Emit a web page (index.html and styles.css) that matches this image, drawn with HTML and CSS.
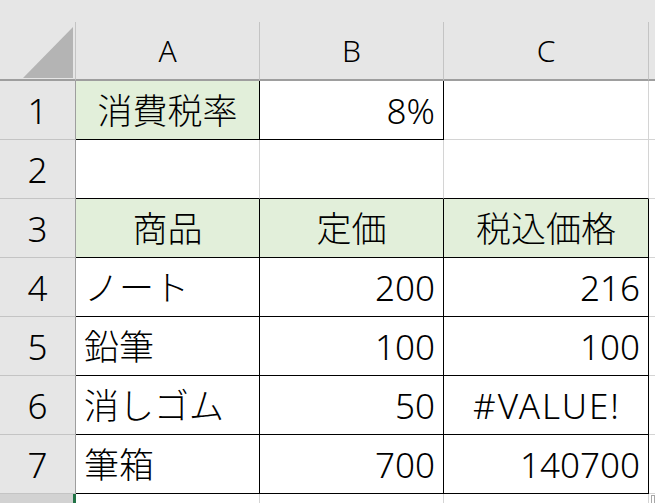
FILE: index.html
```html
<!DOCTYPE html>
<html lang="ja">
<head>
<meta charset="utf-8">
<link rel="stylesheet" href="styles.css">
</head>
<body>
<div class="sheet">
  <div class="topbar"></div>

  <div class="corner"><svg width="50" height="51" viewBox="0 0 50 51"><polygon points="50,0 50,51 0,51" fill="#b4b4b4"/></svg></div>
  <div class="colhead">A</div>
  <div class="colhead">B</div>
  <div class="colhead">C</div>
  <div class="colhead last"></div>

  <div class="rowhead">1</div>
  <div class="cell fill c br bb">消費税率</div>
  <div class="cell r br bb">8%</div>
  <div class="cell"></div>
  <div class="cell last"></div>

  <div class="rowhead">2</div>
  <div class="cell bb"></div>
  <div class="cell bb"></div>
  <div class="cell bb"></div>
  <div class="cell last"></div>

  <div class="rowhead">3</div>
  <div class="cell fill c br bb">商品</div>
  <div class="cell fill c br bb">定価</div>
  <div class="cell fill c br bb">税込価格</div>
  <div class="cell last"></div>

  <div class="rowhead">4</div>
  <div class="cell br bb">ノート</div>
  <div class="cell r br bb">200</div>
  <div class="cell r br bb">216</div>
  <div class="cell last"></div>

  <div class="rowhead">5</div>
  <div class="cell br bb">鉛筆</div>
  <div class="cell r br bb">100</div>
  <div class="cell r br bb">100</div>
  <div class="cell last"></div>

  <div class="rowhead">6</div>
  <div class="cell br bb">消しゴム</div>
  <div class="cell r br bb">50</div>
  <div class="cell c br bb"><span class="err">#VALUE!</span></div>
  <div class="cell last"></div>

  <div class="rowhead">7</div>
  <div class="cell br bb">筆箱</div>
  <div class="cell r br bb">700</div>
  <div class="cell r br bb">140700</div>
  <div class="cell last"></div>

  <div class="rowhead sel"></div>
  <div class="cell"></div>
  <div class="cell"></div>
  <div class="cell"></div>
  <div class="cell last"><span class="handle"></span></div>
</div>
</body>
</html>
```

FILE: styles.css
```css
* { box-sizing: border-box; }
html, body { margin: 0; padding: 0; background: #ffffff; }
body {
  width: 655px;
  height: 503px;
  overflow: hidden;
  font-family: "Noto Sans", "Noto Sans CJK JP", sans-serif;
  font-weight: 300;
  color: #000;
}
.sheet {
  display: grid;
  grid-template-columns: 76px 184px 184px 205px 6px;
  grid-template-rows: 22px 59px repeat(7, 59px) 1fr;
  height: 503px;
}
.topbar {
  grid-column: 1 / -1;
  background: #e6e6e6;
}
.corner {
  background: #e6e6e6;
  border-right: 1px solid #c4c4c4;
  border-bottom: 2px solid #9e9e9e;
  display: flex;
  justify-content: flex-end;
  align-items: flex-end;
  padding: 0 2px 1px 0;
}
.corner svg { display: block; }
.colhead {
  background: #e6e6e6;
  border-right: 1px solid #c4c4c4;
  border-bottom: 2px solid #9e9e9e;
  display: flex;
  align-items: center;
  justify-content: center;
  font-size: 30px;
  line-height: 1;
}
.colhead.last { border-right: none; }
.rowhead {
  background: #e6e6e6;
  border-right: 1px solid #9e9e9e;
  border-bottom: 1px solid #c4c4c4;
  display: flex;
  align-items: center;
  justify-content: center;
  font-size: 35px;
  line-height: 1;
}
.rowhead.sel {
  background: #d2d2d2;
  border-right: 3px solid #217346;
  border-bottom: none;
}
.cell {
  border-right: 1px solid #d4d4d4;
  border-bottom: 1px solid #d4d4d4;
  display: flex;
  align-items: center;
  padding: 0 8px;
  font-size: 35px;
  line-height: 1;
  white-space: nowrap;
}
.cell.last { border-right: none; padding: 0; }
.cell.fill { background: #e2efda; }
.cell.c { justify-content: center; }
.cell.r { justify-content: flex-end; }
.cell.br { border-right-color: #000; }
.cell.bb { border-bottom-color: #000; }
.err { letter-spacing: 2px; margin-right: -2px; }
.handle {
  align-self: flex-start;
  margin: 1px 0 0 2px;
  width: 10px;
  height: 10px;
  border: 1px solid #a8a8a8;
}
```
